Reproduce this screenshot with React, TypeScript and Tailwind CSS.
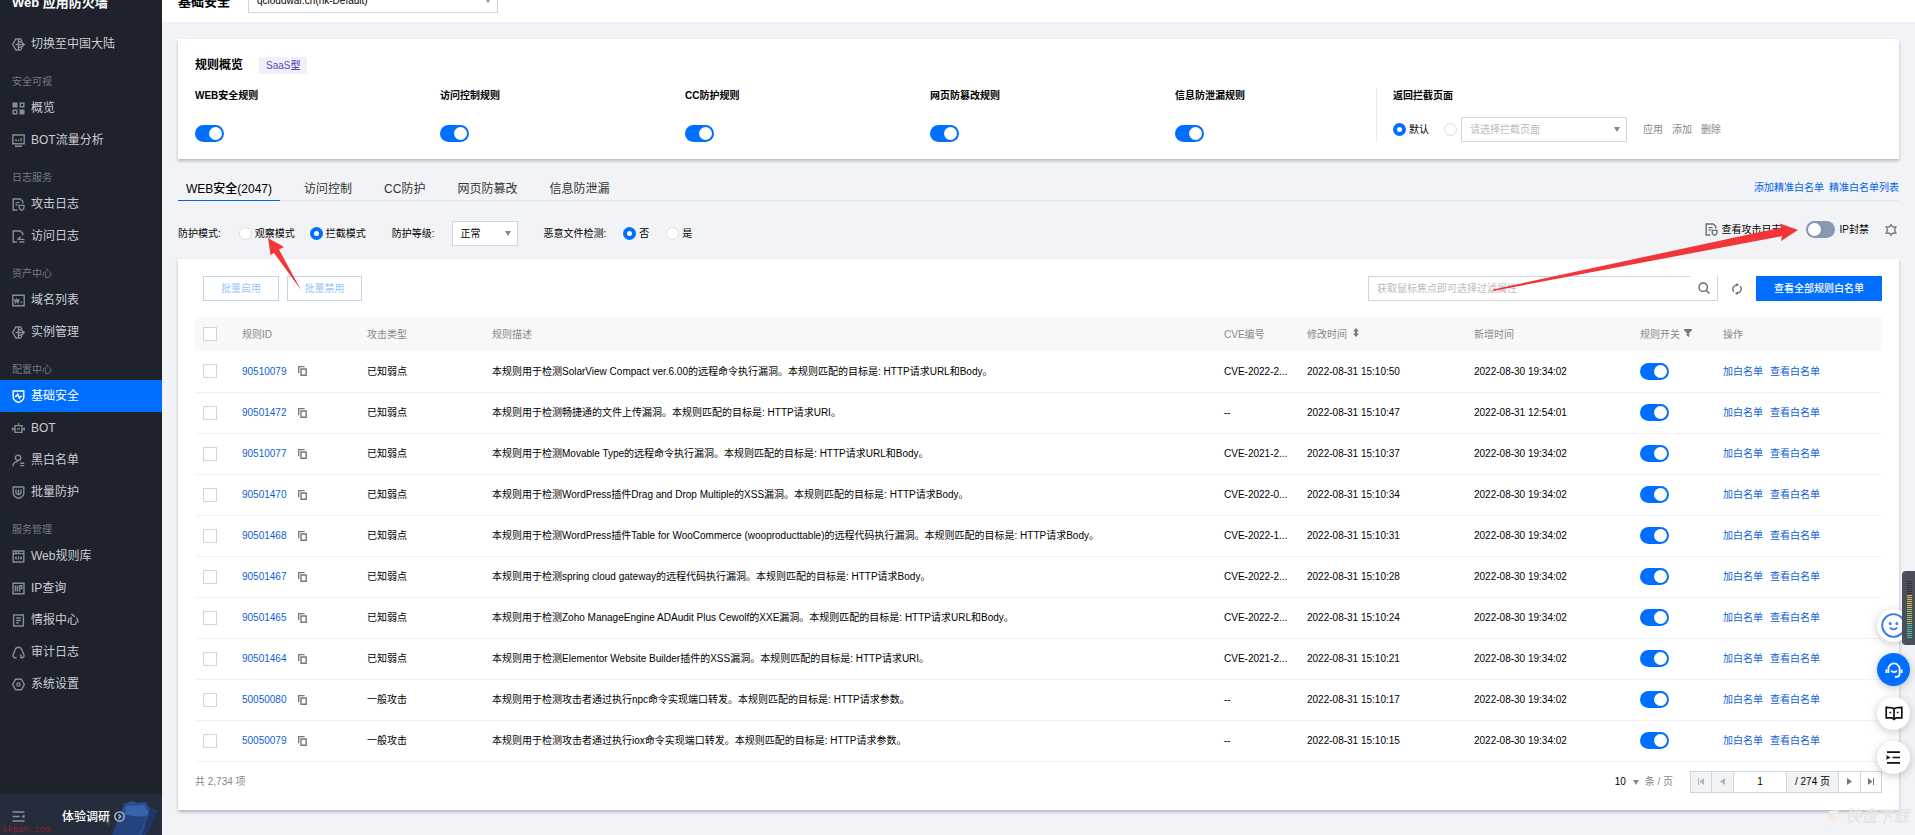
import { useState } from "react";
import type { ReactNode } from "react";

type Rule = {
  id: string;
  type: string;
  desc: string;
  cve: string;
  modified: string;
  created: string;
};

const RULES: Rule[] = [
  { id: "90510079", type: "已知弱点", desc: "本规则用于检测SolarView Compact ver.6.00的远程命令执行漏洞。本规则匹配的目标是: HTTP请求URL和Body。", cve: "CVE-2022-2...", modified: "2022-08-31 15:10:50", created: "2022-08-30 19:34:02" },
  { id: "90501472", type: "已知弱点", desc: "本规则用于检测畅捷通的文件上传漏洞。本规则匹配的目标是: HTTP请求URI。", cve: "--", modified: "2022-08-31 15:10:47", created: "2022-08-31 12:54:01" },
  { id: "90510077", type: "已知弱点", desc: "本规则用于检测Movable Type的远程命令执行漏洞。本规则匹配的目标是: HTTP请求URL和Body。", cve: "CVE-2021-2...", modified: "2022-08-31 15:10:37", created: "2022-08-30 19:34:02" },
  { id: "90501470", type: "已知弱点", desc: "本规则用于检测WordPress插件Drag and Drop Multiple的XSS漏洞。本规则匹配的目标是: HTTP请求Body。", cve: "CVE-2022-0...", modified: "2022-08-31 15:10:34", created: "2022-08-30 19:34:02" },
  { id: "90501468", type: "已知弱点", desc: "本规则用于检测WordPress插件Table for WooCommerce (wooproducttable)的远程代码执行漏洞。本规则匹配的目标是: HTTP请求Body。", cve: "CVE-2022-1...", modified: "2022-08-31 15:10:31", created: "2022-08-30 19:34:02" },
  { id: "90501467", type: "已知弱点", desc: "本规则用于检测spring cloud gateway的远程代码执行漏洞。本规则匹配的目标是: HTTP请求Body。", cve: "CVE-2022-2...", modified: "2022-08-31 15:10:28", created: "2022-08-30 19:34:02" },
  { id: "90501465", type: "已知弱点", desc: "本规则用于检测Zoho ManageEngine ADAudit Plus Cewolf的XXE漏洞。本规则匹配的目标是: HTTP请求URL和Body。", cve: "CVE-2022-2...", modified: "2022-08-31 15:10:24", created: "2022-08-30 19:34:02" },
  { id: "90501464", type: "已知弱点", desc: "本规则用于检测Elementor Website Builder插件的XSS漏洞。本规则匹配的目标是: HTTP请求URI。", cve: "CVE-2021-2...", modified: "2022-08-31 15:10:21", created: "2022-08-30 19:34:02" },
  { id: "50050080", type: "一般攻击", desc: "本规则用于检测攻击者通过执行npc命令实现端口转发。本规则匹配的目标是: HTTP请求参数。", cve: "--", modified: "2022-08-31 15:10:17", created: "2022-08-30 19:34:02" },
  { id: "50050079", type: "一般攻击", desc: "本规则用于检测攻击者通过执行iox命令实现端口转发。本规则匹配的目标是: HTTP请求参数。", cve: "--", modified: "2022-08-31 15:10:15", created: "2022-08-30 19:34:02" },
];

// 侧边栏图标，统一 13x13
const ICONS: Record<string, ReactNode> = {
  region: (
    <>
      <path d="M9.8 3 8.6 1H3.8L.8 6.5l3 5.500h4.800l1.200-2" />
      <path d="M6.400 1v11M3.600 6.500h8.200M6.400 3.800h3l2.800 2.700-2.800 2.700h-3" />
    </>
  ),
  overview: (
    <>
      <path d="M1.200 1.200h3.600v3.600H1.200zM8.200 8.200h3.600v3.600H8.200z" fill="currentColor" />
      <path d="M8.200 1.200h3.600v3.600H8.200zM1.200 8.200h3.600v3.600H1.200z" />
    </>
  ),
  monitor: (
    <>
      <path d="M.8 1h11.400v8.800H.8zM3 12.200h7" />
      <path d="M4 7.200V5M6.500 7.200V5.600M9 7.200V4" />
    </>
  ),
  attackLog: (
    <>
      <path d="M5.400 12H1.200V1h7l2.600 2.600v2M3.600 4.600h4M3.600 7h2" />
      <path d="M7.200 7.400h4.800v2.200c0 1.400-1 2.200-2.400 2.800-1.400-.6-2.400-1.400-2.400-2.800z" />
    </>
  ),
  accessLog: (
    <>
      <path d="M5 12H1.200V1h7l2.600 2.600v1.600" />
      <path d="M5.400 9.400h7M5.800 9.200l3-2.400M7.400 12h5" />
    </>
  ),
  domain: (
    <>
      <path d="M.8 1.200h11.400v10.600H.8z" />
      <path d="M2.600 5l1 3.400L4.800 5.600 6 8.400 7 5M8.600 8.300h1.600" />
    </>
  ),
  shield: (
    <>
      <path d="M1.200 1h10.600v6.200c0 2.400-2 4-5.300 5.200-3.300-1.200-5.300-2.800-5.300-5.200z" />
      <path d="M2.800 6.400h1.600l1.400-2.400 1.600 4.200 1.200-1.800h1.600" />
    </>
  ),
  bot: (
    <>
      <path d="M3 3.600h7v6.800H3zM6.500 3.600V1.200M.6 5.600v3M12.400 5.600v3M1 7h2M10 7h2" />
      <path d="M5 7h3" />
    </>
  ),
  user: (
    <>
      <circle cx="6" cy="3.800" r="2.700" />
      <path d="M1 12.200c0-3 2-4.600 5-4.600M8.200 9.200h4M8.200 11.600h4" />
    </>
  ),
  batch: (
    <>
      <path d="M1.200 1h10.600v6.200c0 2.400-2 4-5.300 5.200-3.300-1.200-5.300-2.800-5.300-5.200z" />
      <path d="M4 3.600v3.800l2.500 1.200L9 7.400V3.600M6.500 3.600v4.600" />
    </>
  ),
  library: (
    <>
      <path d="M1.200 1h10.600v11H1.200zM1.200 3.600h10.600M4 1v2.600M6.600 1v2.600" />
      <path d="M4.600 6.600 3.400 7.900l1.200 1.300M8.400 6.600l1.200 1.300-1.200 1.300M6.500 6.400v3" />
    </>
  ),
  ip: (
    <>
      <path d="M1 1.200h11v10.600H1z" />
      <path d="M3.400 3.400v6.200M5.400 3.400v6.200M7.600 9.800V3.600h2.200v3H7.600" />
    </>
  ),
  intel: (
    <path d="M1.600 1h9.800v11H1.600zM4.200 4h4.600M4.200 6.500h4.600M4.200 9h2.400" />
  ),
  audit: (
    <path d="M4.600 11.600c-2.400.8-4.200-1-3.400-3C2 6.800 2.400 5.600 3 4c.6-1.800 1.800-2.800 3.500-2.800S9.400 2.200 10 4c.6 1.600 1 2.800 1.800 4.600.8 2-1 3.800-3.400 3M8.400 11.600c1.200-1 .6-2.400-.6-2.600" />
  ),
  setting: (
    <>
      <path d="M3.600 1.200h5.800l2.900 5.300-2.900 5.300H3.600L.7 6.500z" />
      <circle cx="6.500" cy="6.500" r="1.600" />
    </>
  ),
};

function SideIcon({ name }: { name: string }) {
  return (
    <svg width="13" height="13" viewBox="0 0 13 13" fill="none" stroke="currentColor" strokeWidth="1.4" className="shrink-0" aria-hidden="true">
      {ICONS[name]}
    </svg>
  );
}

const MENU = [
  { title: "安全可视", items: [["overview", "概览"], ["monitor", "BOT流量分析"]] },
  { title: "日志服务", items: [["attackLog", "攻击日志"], ["accessLog", "访问日志"]] },
  { title: "资产中心", items: [["domain", "域名列表"], ["region", "实例管理"]] },
  { title: "配置中心", items: [["shield", "基础安全"], ["bot", "BOT"], ["user", "黑白名单"], ["batch", "批量防护"]] },
  { title: "服务管理", items: [["library", "Web规则库"], ["ip", "IP查询"], ["intel", "情报中心"], ["audit", "审计日志"], ["setting", "系统设置"]] },
];

function SideItem({ icon, text, active = false }: { icon: string; text: string; active?: boolean }) {
  return (
    <a
      href="#"
      className={
        active
          ? "flex h-8 items-center gap-[6px] bg-[#006eff] px-3 text-xs text-white"
          : "flex h-8 items-center gap-[6px] px-3 text-xs text-[#c9ccd2]"
      }
    >
      <span className={active ? "text-white" : "text-[#868b96]"}>
        <SideIcon name={icon} />
      </span>
      {text}
    </a>
  );
}

function Sidebar() {
  return (
    <aside className="flex w-[162px] shrink-0 flex-col bg-[#1e222d]">
      <div className="h-7 px-3 text-[13px] leading-[6px] font-bold text-white">Web 应用防火墙</div>
      <nav>
        <SideItem icon="region" text="切换至中国大陆" />
        {MENU.map((group) => (
          <div key={group.title}>
            <h2 className="h-8 px-3 pt-[14px] text-[10px] leading-4 text-[#737985]">{group.title}</h2>
            {group.items.map(([icon, text]) => (
              <SideItem key={text} icon={icon} text={text} active={text === "基础安全"} />
            ))}
          </div>
        ))}
      </nav>
      <div className="relative mt-auto flex h-[42px] items-center overflow-hidden bg-[#252c3b] pt-1">
        <svg className="absolute right-0 bottom-0" width="62" height="36" viewBox="0 0 62 36" aria-hidden="true">
          <path d="M0 12c6 0 10 4 10 14l-8-6z" fill="#3a4456" />
          <path d="M24 4l8-3 6 2 8-1 3 6 8 3-12 25H12z" fill="#2a4d8f" />
          <path d="M26 6l18-1 6 10-26 3z" fill="#3862ad" />
          <path d="M20 14l26 4-8 18H12z" fill="#23427e" />
          <path d="M50 8l7 4-9 20-6 4z" fill="#1f3768" />
        </svg>
        <button type="button" aria-label="收起菜单" className="ml-3 text-[#8b909b]">
          <svg width="13" height="13" viewBox="0 0 13 13" fill="none" stroke="currentColor" strokeWidth="1.3">
            <path d="M.5 2h12M.5 6.500h7M.5 11h12" />
            <path d="M12.500 4.500v4l-3-2z" fill="currentColor" stroke="none" />
          </svg>
        </button>
        <a href="#" className="relative ml-[37px] flex items-center gap-1 text-xs font-medium text-white">
          体验调研
          <svg width="11" height="11" viewBox="0 0 11 11" fill="none" stroke="#b9c0cc" strokeWidth="1.3" aria-hidden="true">
            <circle cx="5.500" cy="5.500" r="4.700" />
            <path d="M4.600 3.500l2 2-2 2" />
          </svg>
        </a>
        <span className="absolute bottom-0 left-[2px] font-['Liberation_Mono',monospace] text-[9px] leading-3 text-[#8e1f2b]">kkpan.com</span>
      </div>
    </aside>
  );
}

function Switch({ label, defaultChecked = true }: { label: string; defaultChecked?: boolean }) {
  return (
    <input
      type="checkbox"
      role="switch"
      aria-label={label}
      defaultChecked={defaultChecked}
      className="relative block h-[17px] w-[29px] shrink-0 appearance-none rounded-full bg-[#8797b0] before:absolute before:top-[2px] before:left-[2px] before:size-[13px] before:rounded-full before:bg-white checked:bg-[#006eff] checked:before:left-[14px]"
    />
  );
}

function Radio({ name, text, checked = false }: { name: string; text: string; checked?: boolean }) {
  return (
    <label className="flex items-center gap-[3px]">
      <input
        type="radio"
        name={name}
        defaultChecked={checked}
        aria-label={text || "自定义"}
        className="size-[13px] shrink-0 appearance-none rounded-full border border-[#dddddd] bg-white checked:border-4 checked:border-[#006eff]"
      />
      {text}
    </label>
  );
}

function Caret({ className }: { className: string }) {
  return (
    <svg className={className} width="6" height="5" viewBox="0 0 6 5" aria-hidden="true">
      <path d="M0 0h6L3 5z" fill="#888" />
    </svg>
  );
}

function Checkbox({ label }: { label: string }) {
  return (
    <input
      type="checkbox"
      aria-label={label}
      className="block size-[14px] appearance-none border border-[#cfd5de] bg-white checked:bg-[#006eff]"
    />
  );
}

function Overview() {
  const rules = ["WEB安全规则", "访问控制规则", "CC防护规则", "网页防篡改规则", "信息防泄漏规则"];
  return (
    <section className="mt-[17px] h-[120px] bg-white px-[17px] pt-[17px] shadow-[0_2px_3px_rgba(54,58,80,0.32)]">
      <div className="flex h-[18px] items-center gap-4">
        <h2 className="text-xs font-bold">规则概览</h2>
        <span className="bg-[#f1effc] px-[7px] text-[10px] leading-[17px] font-medium text-[#5a4bb0]">SaaS型</span>
      </div>
      <div className="mt-[14px] flex h-[54px]">
        <div className="grid w-[70%] grid-cols-5 gap-11">
          {rules.map((rule) => (
            <div key={rule} className="flex flex-col justify-between">
              <span className="leading-4 font-bold whitespace-nowrap">{rule}</span>
              <Switch label={rule} />
            </div>
          ))}
        </div>
        <div className="flex w-[30%] flex-col justify-between border-l border-[#e8eaee] pl-4">
          <span className="leading-4 font-bold">返回拦截页面</span>
          <div className="flex h-[25px] items-center">
            <Radio name="page" text="默认" checked />
            <span className="mr-1 ml-[15px]">
              <Radio name="page" text="" />
            </span>
            <span className="relative">
              <select aria-label="拦截页面" className="block h-[25px] w-[166px] appearance-none border border-[#cfd5de] bg-white pl-2 text-[#bbbbbb]">
                <option>请选择拦截页面</option>
              </select>
              <Caret className="pointer-events-none absolute top-[10px] right-[7px]" />
            </span>
            <div className="ml-4 flex gap-[9px] text-[#888888]">
              <button type="button">应用</button>
              <button type="button">添加</button>
              <button type="button">删除</button>
            </div>
          </div>
        </div>
      </div>
    </section>
  );
}

function Tabs() {
  const [current, setCurrent] = useState(0);
  const tabs = ["WEB安全(2047)", "访问控制", "CC防护", "网页防篡改", "信息防泄漏"];
  return (
    <div className="mt-4 flex h-[26px] items-center justify-between border-b border-[#e3e6eb]">
      <div role="tablist" className="flex gap-4 text-xs">
        {tabs.map((tab, i) => (
          <button
            key={tab}
            type="button"
            role="tab"
            aria-selected={i === current}
            onClick={() => setCurrent(i)}
            className={
              i === current
                ? "h-[26px] border-b border-[#0067df] px-2 pt-[3px] font-medium text-black"
                : "h-[26px] border-b border-transparent px-2 pt-[3px] text-[#333333]"
            }
          >
            {tab}
          </button>
        ))}
      </div>
      <div className="flex gap-[5px] text-[#0064e6]">
        <a href="#">添加精准白名单</a>
        <a href="#">精准白名单列表</a>
      </div>
    </div>
  );
}

function ModeBar() {
  return (
    <div className="flex items-start justify-between pt-5 pb-[13px]">
      <div className="flex h-[25px] items-center">
        <span>防护模式:</span>
        <div className="ml-[18px] flex gap-[15px]">
          <Radio name="mode" text="观察模式" />
          <Radio name="mode" text="拦截模式" checked />
        </div>
        <label htmlFor="level" className="ml-[26px]">防护等级:</label>
        <span className="relative ml-[17px]">
          <select id="level" className="block h-[25px] w-[66px] appearance-none border border-[#cfd5de] bg-white pl-2">
            <option>正常</option>
          </select>
          <Caret className="pointer-events-none absolute top-[10px] right-[7px]" />
        </span>
        <span className="ml-[26px]">恶意文件检测:</span>
        <div className="ml-[17px] flex gap-[17px]">
          <Radio name="malware" text="否" checked />
          <Radio name="malware" text="是" />
        </div>
      </div>
      <div className="flex h-[17px] items-center">
        <a href="#" className="flex items-center gap-1">
          <span className="text-[#6b6f78]">
            <SideIcon name="attackLog" />
          </span>
          查看攻击日志
        </a>
        <span className="ml-6 flex items-center gap-[5px]">
          <Switch label="IP封禁" defaultChecked={false} />
          IP封禁
        </span>
        <button type="button" aria-label="设置" className="mr-[2px] ml-4">
          <svg width="12" height="12" viewBox="0 0 12 12" fill="none" stroke="#777" strokeWidth="1.4">
            <path d="M6 .8 7.500 2.800 10.800 3 9.500 6l1.300 3-3.300.2L6 11.200 4.500 9.200 1.200 9l1.300-3-1.300-3 3.300-.2z" />
          </svg>
        </button>
      </div>
    </div>
  );
}

function CopyIcon() {
  return (
    <svg width="9" height="10" viewBox="0 0 9 10" fill="none" stroke="#777" aria-hidden="true">
      <path d="M.7 7.200V.7H6.600" strokeWidth="1.300" />
      <path d="M3 3h5.200v6.200H3z" strokeWidth="1.400" />
    </svg>
  );
}

function RuleTable() {
  return (
    <table className="mt-4 w-full table-fixed text-left">
      <colgroup>
        <col className="w-[39px]" />
        <col className="w-[125px]" />
        <col className="w-[125px]" />
        <col />
        <col className="w-[83px]" />
        <col className="w-[167px]" />
        <col className="w-[166px]" />
        <col className="w-[83px]" />
        <col className="w-[167px]" />
      </colgroup>
      <thead>
        <tr className="h-[34px] bg-[#f8f8f8] text-[#888888] *:px-2 *:font-normal">
          <th><Checkbox label="全选" /></th>
          <th>规则ID</th>
          <th>攻击类型</th>
          <th>规则描述</th>
          <th>CVE编号</th>
          <th>
            <span className="flex items-start gap-[6px]">
              修改时间
              <svg className="mt-px" width="6" height="9" viewBox="0 0 6 9" fill="#777" aria-hidden="true">
                <path d="M3 0l3 3.500H4v2h2L3 9 0 5.500h2v-2H0z" />
              </svg>
            </span>
          </th>
          <th>新增时间</th>
          <th>
            <span className="flex items-start gap-1 whitespace-nowrap">
              规则开关
              <svg className="mt-[2px]" width="8" height="8" viewBox="0 0 8 8" fill="#777" aria-hidden="true">
                <path d="M0 0h8v1.200L5.200 4v4L2.800 6.800V4L0 1.200z" />
              </svg>
            </span>
          </th>
          <th>操作</th>
        </tr>
      </thead>
      <tbody>
        {RULES.map((rule) => (
          <tr key={rule.id} className="h-[41px] border-b border-[#f1f2f4] *:px-2">
            <td><Checkbox label={rule.id} /></td>
            <td>
              <span className="flex items-center gap-[11px]">
                <a href="#" className="text-[#0d5fd3]">{rule.id}</a>
                <button type="button" aria-label="复制"><CopyIcon /></button>
              </span>
            </td>
            <td>{rule.type}</td>
            <td className="truncate">{rule.desc}</td>
            <td className="whitespace-nowrap">{rule.cve}</td>
            <td>{rule.modified}</td>
            <td>{rule.created}</td>
            <td><Switch label={"规则开关 " + rule.id} /></td>
            <td>
              <span className="flex gap-[7px] text-[#0d5fd3]">
                <a href="#">加白名单</a>
                <a href="#">查看白名单</a>
              </span>
            </td>
          </tr>
        ))}
      </tbody>
    </table>
  );
}

function Pager() {
  return (
    <div className="mt-[9px] flex h-[22px] items-center justify-between text-[#888888]">
      <span>共 2,734 项</span>
      <div className="flex items-center">
        <span className="relative">
          <select aria-label="每页条数" className="block w-[24px] appearance-none text-black">
            <option>10</option>
          </select>
          <Caret className="pointer-events-none absolute top-[6px] right-0" />
        </span>
        <span className="ml-[6px]">条 / 页</span>
        <div className="ml-[17px] flex h-[22px] border border-[#cfd5de] text-black">
          <button type="button" disabled aria-label="首页" className="flex w-[21px] items-center justify-center border-r border-[#cfd5de] bg-[#f2f3f5]">
            <svg width="6" height="7" viewBox="0 0 6 7" fill="#b0b4bb"><path d="M0 0h1v7H0zM6 0v7L1.500 3.500z" /></svg>
          </button>
          <button type="button" disabled aria-label="上一页" className="flex w-[22px] items-center justify-center border-r border-[#cfd5de] bg-[#f2f3f5]">
            <svg width="5" height="7" viewBox="0 0 5 7" fill="#b0b4bb"><path d="M5 0v7L0 3.500z" /></svg>
          </button>
          <input type="text" aria-label="页码" defaultValue="1" className="w-[53px] border-r border-[#cfd5de] text-center" />
          <span className="flex w-[52px] items-center justify-center border-r border-[#cfd5de] bg-[#f2f3f5] whitespace-nowrap">/ 274 页</span>
          <button type="button" aria-label="下一页" className="flex w-[22px] items-center justify-center border-r border-[#cfd5de]">
            <svg width="5" height="7" viewBox="0 0 5 7" fill="#777"><path d="M0 0v7l5-3.500z" /></svg>
          </button>
          <button type="button" aria-label="尾页" className="flex w-5 items-center justify-center">
            <svg width="6" height="7" viewBox="0 0 6 7" fill="#777"><path d="M5 0h1v7H5zM0 0v7l4.500-3.500z" /></svg>
          </button>
        </div>
      </div>
    </div>
  );
}

function RulePanel() {
  return (
    <section className="relative bg-white p-[17px] shadow-[0_2px_3px_rgba(54,58,80,0.32)]">
      <div className="flex h-[25px] justify-between">
        <div className="ml-2 flex gap-2 text-[#99c5ff]">
          <button type="button" disabled className="w-[76px] border border-[#c3d3e8]">批量启用</button>
          <button type="button" disabled className="w-[75px] border border-[#c3d3e8]">批量禁用</button>
        </div>
        <div className="flex items-center">
          <div className="flex h-[25px] w-[350px]">
            <input
              type="search"
              aria-label="搜索规则"
              placeholder="获取鼠标焦点即可选择过滤属性"
              className="min-w-0 flex-1 border-y border-l border-[#cfd5de] pl-2 placeholder:text-[#bbbbbb]"
            />
            <button type="button" aria-label="搜索" className="flex w-7 items-center justify-center border-r border-b border-[#cfd5de]">
              <svg width="12" height="12" viewBox="0 0 12 12" fill="none" stroke="#666" strokeWidth="1.4">
                <circle cx="5.200" cy="5.200" r="4.200" />
                <path d="M8.200 8.200l3.200 3.200" />
              </svg>
            </button>
          </div>
          <button type="button" aria-label="刷新" className="mx-[14px]">
            <svg width="10" height="12" viewBox="0 0 10 12" fill="none" stroke="#666" strokeWidth="1.3">
              <path d="M1.800 8.800A4.300 4.300 0 0 1 5 1.800M8.200 3.200A4.300 4.300 0 0 1 5 10.200" />
              <path d="M4.400 0 7 1.800 4.400 3.600zM5.600 8.400 3 10.200 5.600 12z" fill="#666" stroke="none" />
            </svg>
          </button>
          <button type="button" className="h-[25px] w-[126px] bg-[#006eff] font-medium text-white">查看全部规则白名单</button>
        </div>
      </div>
      <RuleTable />
      <Pager />

      {/* 红色指引箭头 */}
      <svg className="pointer-events-none absolute -top-[22px] left-[88px]" width="38" height="56" viewBox="0 0 38 56" aria-hidden="true">
        <path d="M2 1l16 9-5 2.500L35 53 8 16l-3.500 2z" fill="#f23538" />
      </svg>
      <svg className="pointer-events-none absolute -top-[37px] right-[99px]" width="308" height="70" viewBox="0 0 308 70" aria-hidden="true">
        <path d="M306 8l-18-6.500 1 4L1 67.500v1.500L290 14l-1 5z" fill="#f23538" />
      </svg>
    </section>
  );
}

function FloatTools() {
  return (
    <>
      <div className="fixed right-[5px] bottom-[61px] flex flex-col gap-[11px] *:flex *:size-[33px] *:items-center *:justify-center *:rounded-full *:shadow-[0_2px_8px_rgba(54,58,80,0.28)]">
        <button type="button" aria-label="体验反馈" className="bg-white">
          <svg width="25" height="25" viewBox="0 0 25 25" fill="none" stroke="#2f7ae5" strokeWidth="1.8">
            <circle cx="12.500" cy="12.500" r="11.300" />
            <circle cx="9.200" cy="10.500" r=".6" />
            <circle cx="15.800" cy="10.500" r=".6" />
            <path d="M9 14.500c1.500 2.600 5.500 2.600 7 0" />
          </svg>
        </button>
        <button type="button" aria-label="在线客服" className="bg-[#006eff]">
          <svg width="18" height="18" viewBox="0 0 18 18" fill="none" stroke="#fff" strokeWidth="1.8">
            <path d="M3.400 12V8a5.600 5.600 0 0 1 11.200 0v5c0 1.800-1.600 3-4.600 3" />
            <path d="M1.400 8.500v3.500M16.600 8.500v3.500M6.200 9.500c1 2.200 4.600 2.200 5.600 0" />
          </svg>
        </button>
        <button type="button" aria-label="文档" className="bg-white">
          <svg width="18" height="15" viewBox="0 0 18 15" fill="none" stroke="#111" strokeWidth="1.7">
            <path d="M9 3C7.800 1.600 6 1.400 1.200 1.400v10.400H7l2 1.600 2-1.600h5.800V1.400C12 1.400 10.200 1.600 9 3zM9 3v10" />
            <path d="M4.500 6.500h1.700M11.800 6.500h1.700" />
          </svg>
        </button>
        <button type="button" aria-label="展开" className="bg-white">
          <svg width="15" height="13" viewBox="0 0 15 13" fill="none" stroke="#111" strokeWidth="1.7">
            <path d="M1 1.200h13M6.500 6.500H14M1 11.800h13" />
            <path d="M.5 4.200v4.600l4-2.300z" fill="#111" stroke="none" />
          </svg>
        </button>
      </div>
      {/* 音量条 */}
      <div className="fixed right-0 bottom-[190px] flex h-[74px] w-[13px] flex-col justify-end gap-px rounded-l bg-[#4b4f5b] py-[7px] pr-[3px] pl-[5px] *:h-px *:w-full">
        {Array.from({ length: 7 }, (_, i) => <i key={"o" + i} className="bg-[#2f3340]" />)}
        {Array.from({ length: 8 }, (_, i) => <i key={"y" + i} className="bg-[#d5bd4c]" />)}
        {Array.from({ length: 7 }, (_, i) => <i key={"g" + i} className="bg-[#8fc46c]" />)}
        {Array.from({ length: 7 }, (_, i) => <i key={"t" + i} className="bg-[#45c49a]" />)}
      </div>
      <div className="pointer-events-none fixed right-[6px] bottom-[8px] flex items-center gap-1 text-[#e6e6e9]" aria-hidden="true">
        <svg width="14" height="17" viewBox="0 0 14 17" fill="#f6ebe4">
          <path d="M2 2l10-1-4 6h5L3 16l3-6H1z" />
        </svg>
        <span className="text-[16px] leading-5 font-bold italic">快盘下载</span>
      </div>
    </>
  );
}

export default function App() {
  return (
    <div className="flex min-h-screen overflow-hidden bg-[#f2f3f7] font-['Liberation_Sans','Noto_Sans_CJK_SC',sans-serif] text-[10px] leading-[15px] text-black">
      <Sidebar />
      <div className="min-w-0 flex-1">
        <header className="flex h-[22px] items-start gap-[18px] bg-white px-4">
          <h1 className="text-[13px] leading-[4px] font-bold">基础安全</h1>
          <span className="relative -mt-3">
            <select aria-label="域名" className="block h-[25px] w-[250px] appearance-none border border-[#cfd5de] bg-white pl-2">
              <option>qcloudwaf.cn(hk-Default)</option>
            </select>
            <Caret className="pointer-events-none absolute top-[10px] right-[7px]" />
          </span>
        </header>
        <main className="px-4 pb-[26px]">
          <Overview />
          <Tabs />
          <ModeBar />
          <RulePanel />
        </main>
      </div>
      <FloatTools />
    </div>
  );
}
